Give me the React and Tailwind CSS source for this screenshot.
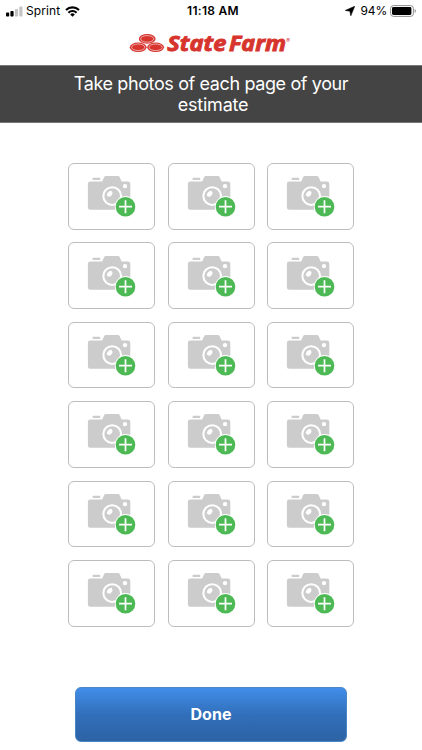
function Signal() {
  return (
    <svg className="ml-[6px] h-[11px] w-[18px]" viewBox="0 0 18 11">
      <rect x="0" y="6.6" width="3.2" height="3.9" rx="0.8" fill="#000" />
      <rect x="4.4" y="5" width="3.2" height="5.5" rx="0.8" fill="#000" />
      <rect x="8.9" y="3" width="3.2" height="7.5" rx="0.8" fill="#c4c4c4" />
      <rect x="13.3" y="0.6" width="3.2" height="9.9" rx="0.8" fill="#c4c4c4" />
    </svg>
  );
}

function Wifi() {
  return (
    <svg className="ml-[5px] h-[11px] w-[15px]" viewBox="0 0 15 11">
      <g fill="none" stroke="#000" strokeWidth="2.1">
        <path d="M1 4.1a9.2 9.2 0 0 1 13 0" />
        <path d="M3.4 6.7a5.8 5.8 0 0 1 8.2 0" />
      </g>
      <path d="M5.2 8.4a3.3 3.3 0 0 1 4.6 0L7.5 10.8z" fill="#000" />
    </svg>
  );
}

function StatusBar() {
  return (
    <div className="grid h-[22px] grid-cols-[1fr_auto_1fr] items-center text-[12px] leading-none text-black">
      <div className="flex items-center">
        <Signal />
        <span className="ml-[2px] text-[12px] tracking-[0.1px]">Sprint</span>
        <Wifi />
      </div>
      <span className="ml-[4px] text-[12px] font-semibold tracking-[0.3px]">11:18 AM</span>
      <div className="flex items-center justify-end pr-[5px]">
        <svg className="mr-[6px] h-[10px] w-[10px]" viewBox="0 0 10 10">
          <path d="M9.7.3 5.8 9.8 4.9 5.2.3 4.4z" fill="#000" stroke="#000" strokeWidth="0.6" strokeLinejoin="round" />
        </svg>
        <span className="text-[12px] tracking-[-0.2px]">94%</span>
        <svg className="ml-[3px] h-[12px] w-[27px]" viewBox="0 0 27 12">
          <rect x="0.6" y="0.6" width="22.8" height="10.8" rx="2.8" fill="none" stroke="#8d8d8d" />
          <rect x="2" y="2" width="19.4" height="8" rx="1.4" fill="#000" />
          <path d="M24.7 4v4c1.6-.5 1.6-3.5 0-4z" fill="#8d8d8d" />
        </svg>
      </div>
    </div>
  );
}

function Oval({ cx, cy }) {
  return (
    <g>
      <ellipse cx={cx} cy={cy} rx="8.4" ry="4.8" fill="#d7342e" />
      <ellipse cx={cx} cy={cy} rx="6.6" ry="3.3" fill="none" stroke="#fff" strokeOpacity="0.8" strokeWidth="0.7" />
    </g>
  );
}

function Logo() {
  return (
    <svg className="h-[36px] w-[164px]" viewBox="129 25 164 36">
      <Oval cx={147.2} cy={38.9} />
      <Oval cx={138.2} cy={47.3} />
      <Oval cx={155.6} cy={47.3} />
      <g fill="#d7342e" stroke="#d7342e" strokeWidth="0.9" fontFamily="'Open Sans', 'Noto Sans', sans-serif" fontWeight="700" fontStyle="italic" fontSize="21.5">
        <text x="167.3" y="50.6" textLength="59" lengthAdjust="spacingAndGlyphs">State</text>
        <text x="229" y="50.6" textLength="57" lengthAdjust="spacingAndGlyphs">Farm</text>
      </g>
      <text x="286.3" y="43" fill="#d7342e" fontFamily="Inter, sans-serif" fontSize="5.5">®</text>
    </svg>
  );
}

function PhotoSlot() {
  return (
    <button aria-label="Add photo" className="h-[66.6px] w-[87px] rounded-[6px] border border-[#bdbdbd] bg-white">
      <svg className="ml-[18px] h-[44px] w-[50px]" viewBox="87 174 50 44">
        <path
          d="M90.2 181.6h12l2-4.5q.5-1.1 1.7-1.1h12q1.2 0 1.7 1.1l2 4.5h6.4q2.3 0 2.3 2.3v23.6q0 2.3-2.3 2.3H90.2q-2.3 0-2.3-2.3v-23.6q0-2.3 2.3-2.3z"
          fill="#ccc"
        />
        <rect x="92.6" y="177.8" width="7.6" height="2.2" rx="0.6" fill="#ccc" />
        <circle cx="125" cy="186.1" r="2.2" fill="#fff" />
        <circle cx="112.2" cy="196.1" r="9.9" fill="#fff" />
        <circle cx="112.2" cy="196.1" r="7.8" fill="#ccc" />
        <path d="M111.3 190.8a5.4 5.4 0 0 0-4.6 4.8a2.9 2.9 0 1 0 4.6-4.8z" fill="#fff" />
        <circle cx="125.5" cy="206.7" r="10.7" fill="#fff" />
        <circle cx="125.5" cy="206.7" r="9.8" fill="#4cb955" />
        <path d="M125.5 200.2v13M119 206.7h13" stroke="#fff" strokeWidth="1.7" />
      </svg>
    </button>
  );
}

export default function App() {
  return (
    <main className="flex h-[750px] w-[422px] flex-col overflow-hidden bg-white font-[Inter,'Liberation_Sans',sans-serif]">
      <StatusBar />
      <header className="flex h-[43px] items-start justify-center pt-[3px]">
        <Logo />
      </header>
      <h1 className="flex h-[58px] items-center justify-center border-y border-[#777] bg-[#444] px-[60px] text-center text-[18px] leading-[21.5px] font-normal tracking-[-0.38px] text-white">
        <span>
          Take photos of each page of your
          <br />
          <span className="pl-[4px] tracking-[-0.2px]">estimate</span>
        </span>
      </h1>
      <div className="mt-[40px] ml-[68px] grid w-[287px] grid-cols-[repeat(3,87px)] gap-x-[12.7px] gap-y-[12.8px]">
        {Array.from({ length: 18 }, (_, i) => (
          <PhotoSlot key={i} />
        ))}
      </div>
      <button className="mt-[60px] ml-[75px] h-[55px] w-[272px] rounded-[6px] border border-[#4d86c6] bg-linear-to-b from-[#428eea] via-[#316fba] to-[#2c63a5] text-[16px] font-bold text-white">
        Done
      </button>
    </main>
  );
}
